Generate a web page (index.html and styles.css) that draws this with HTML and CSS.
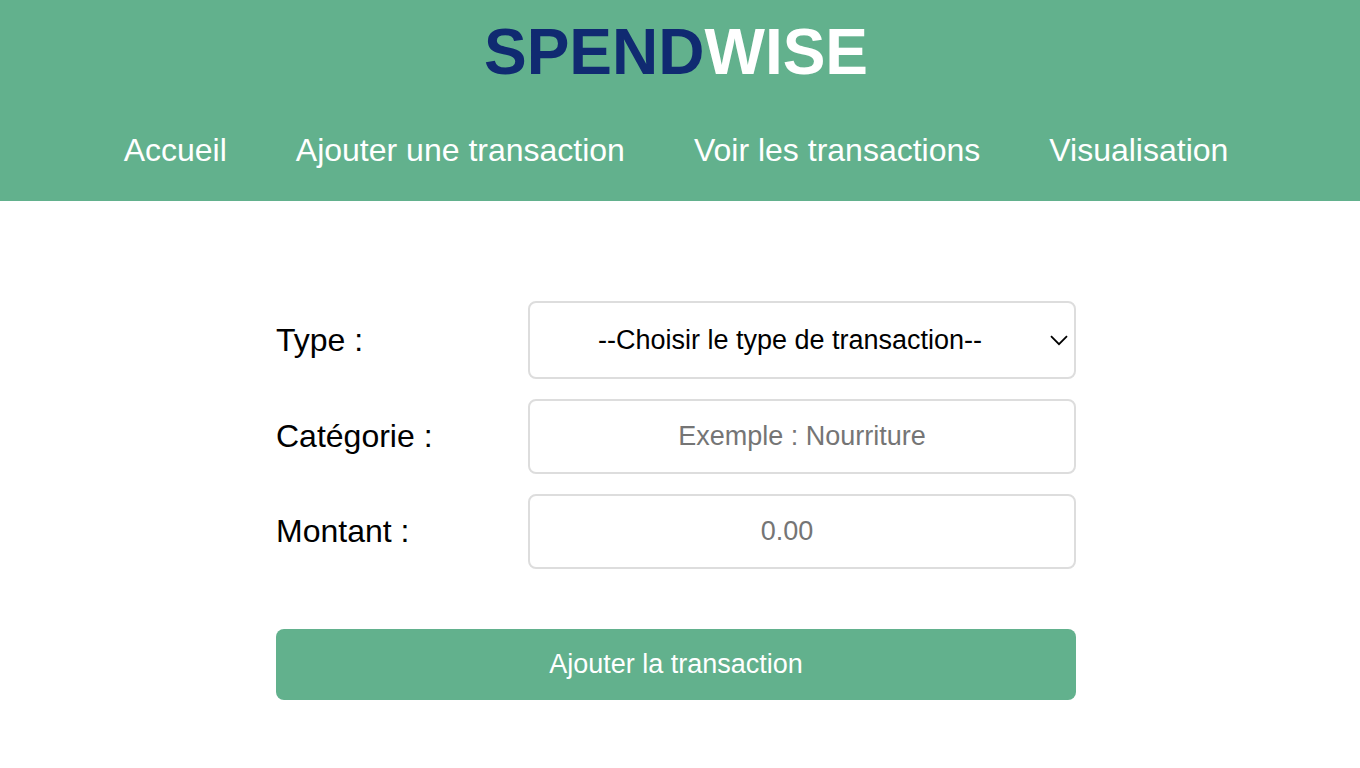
FILE: index.html
```html
<!DOCTYPE html>
<html lang="fr">
<head>
<meta charset="utf-8">
<meta name="viewport" content="width=device-width, initial-scale=1">
<title>Spendwise</title>
<link rel="stylesheet" href="styles.css">
</head>
<body>
<header class="header">
  <h1 class="logo"><span class="logo-accent">SPEND</span>WISE</h1>
  <nav class="nav">
    <a href="#">Accueil</a>
    <a href="#">Ajouter une transaction</a>
    <a href="#">Voir les transactions</a>
    <a href="#">Visualisation</a>
  </nav>
</header>
<main class="main">
  <form class="form">
    <div class="row">
      <label class="label" for="type">Type :</label>
      <div class="control">
        <select id="type" class="field select">
          <option>--Choisir le type de transaction--</option>
          <option>Revenu</option>
          <option>Dépense</option>
        </select>
        <svg class="chevron" width="18" height="11" viewBox="0 0 18 11" aria-hidden="true"><path d="M1 1.2 9 9.2l8-8" fill="none" stroke="#000" stroke-width="1.8"/></svg>
      </div>
    </div>
    <div class="row">
      <label class="label" for="category">Catégorie :</label>
      <div class="control">
        <input id="category" class="field" type="text" placeholder="Exemple : Nourriture">
      </div>
    </div>
    <div class="row">
      <label class="label" for="amount">Montant :</label>
      <div class="control">
        <input id="amount" class="field amount" type="number" step="0.01" placeholder="0.00">
      </div>
    </div>
    <button class="submit" type="submit">Ajouter la transaction</button>
  </form>
</main>
</body>
</html>
```

FILE: styles.css
```css
* {
  box-sizing: border-box;
}

body {
  margin: 0;
  background: #fff;
  color: #000;
  font-family: "Liberation Sans", Arial, sans-serif;
  font-size: 32px;
}

.header {
  display: flex;
  flex-direction: column;
  align-items: center;
  gap: 42px;
  padding: 14px 8px 32px 0;
  background: #62b18d;
  color: #fff;
}

.logo {
  margin: 0;
  font-size: 64px;
  line-height: 76px;
}

.logo-accent {
  color: #102a71;
}

.nav {
  display: flex;
  flex-wrap: wrap;
  justify-content: center;
  gap: 16px 69px;
  line-height: 37px;
}

.nav a {
  color: #fff;
  text-decoration: none;
}

.main {
  padding: 100px 8px 64px 0;
}

.form {
  display: flex;
  flex-direction: column;
  gap: 20px;
  max-width: 800px;
  margin: 0 auto;
}

.row {
  display: flex;
  align-items: center;
}

.label {
  flex: 0 0 252px;
}

.control {
  position: relative;
  flex: 1;
  min-width: 0;
}

.field {
  display: block;
  width: 100%;
  height: 75px;
  padding: 0 20px;
  border: 2px solid #ddd;
  border-radius: 8px;
  background: #fff;
  color: #000;
  font-family: inherit;
  font-size: 27px;
  text-align: center;
}

.field::placeholder {
  color: #757575;
}

.select {
  height: 78px;
  padding: 0 44px 0 20px;
  appearance: none;
}

.chevron {
  position: absolute;
  top: 34px;
  right: 8px;
  pointer-events: none;
}

.amount {
  padding-right: 50px;
  appearance: textfield;
}

.amount::-webkit-inner-spin-button {
  appearance: none;
  margin: 0;
}

.submit {
  height: 71px;
  margin-top: 40px;
  border: 0;
  border-radius: 8px;
  background: #62b18d;
  color: #fff;
  font-family: inherit;
  font-size: 27px;
}
```
